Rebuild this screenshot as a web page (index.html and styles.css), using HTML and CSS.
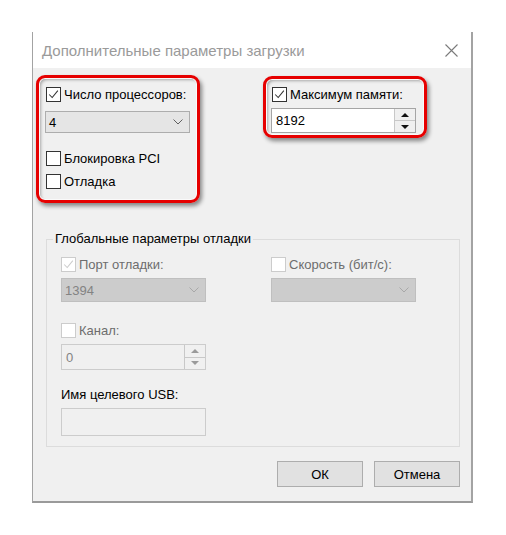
FILE: index.html
```html
<!DOCTYPE html>
<html lang="ru">
<head>
    <meta charset="UTF-8">
    <title>Дополнительные параметры загрузки</title>
    <link rel="stylesheet" href="styles.css">
</head>
<body>
    <div class="dialog">
        <div class="titlebar">
            <span class="title">Дополнительные параметры загрузки</span>
            <svg class="close" width="13" height="13" viewBox="0 0 13 13">
                <path d="M0.5 0.5 L12.5 12.5 M12.5 0.5 L0.5 12.5" stroke="#7a7a7a" stroke-width="1.1" fill="none"/>
            </svg>
        </div>

        <div class="content">
            <div class="top-row">
                <div class="mark mark-cpu">
                    <label class="check">
                        <span class="box"><svg viewBox="0 0 15 15"><path d="M2.5 7.5 L6 11 L12.5 3" /></svg></span>
                        Число процессоров:
                    </label>
                    <div class="select">
                        <span>4</span>
                        <svg class="chevron" viewBox="0 0 10 6"><path d="M0.5 0.5 L5 5 L9.5 0.5"/></svg>
                    </div>
                    <label class="check check-pci"><span class="box"></span>Блокировка PCI</label>
                    <label class="check check-debug"><span class="box"></span>Отладка</label>
                </div>

                <div class="mark mark-mem">
                    <label class="check">
                        <span class="box"><svg viewBox="0 0 15 15"><path d="M2.5 7.5 L6 11 L12.5 3" /></svg></span>
                        Максимум памяти:
                    </label>
                    <div class="spin">
                        <span>8192</span>
                        <div class="spin-btns">
                            <span class="up"></span>
                            <span class="down"></span>
                        </div>
                    </div>
                </div>
            </div>

            <div class="group">
                <span class="legend">Глобальные параметры отладки</span>
                <div class="group-row">
                    <div class="col">
                        <label class="check disabled">
                            <span class="box"><svg viewBox="0 0 15 15"><path d="M2.5 7.5 L6 11 L12.5 3" /></svg></span>
                            Порт отладки:
                        </label>
                        <div class="select select-off">
                            <span>1394</span>
                            <svg class="chevron" viewBox="0 0 10 6"><path d="M0.5 0.5 L5 5 L9.5 0.5"/></svg>
                        </div>
                    </div>
                    <div class="col">
                        <label class="check disabled"><span class="box"></span>Скорость (бит/с):</label>
                        <div class="select select-off">
                            <span></span>
                            <svg class="chevron" viewBox="0 0 10 6"><path d="M0.5 0.5 L5 5 L9.5 0.5"/></svg>
                        </div>
                    </div>
                </div>

                <label class="check disabled check-channel"><span class="box"></span>Канал:</label>
                <div class="spin spin-off">
                    <span>0</span>
                    <div class="spin-btns">
                        <span class="up"></span>
                        <span class="down"></span>
                    </div>
                </div>

                <div class="usb-label">Имя целевого USB:</div>
                <div class="usb-input"></div>
            </div>

            <div class="buttons">
                <button class="btn">ОК</button>
                <button class="btn">Отмена</button>
            </div>
        </div>
    </div>
</body>
</html>
```

FILE: styles.css
```css
* {
    margin: 0;
    padding: 0;
    box-sizing: border-box;
}

body {
    background: #fff;
    font-family: 'Liberation Sans', Arial, sans-serif;
    font-size: 13px;
    color: #000;
    padding: 32px 0 0 32px;
}

.dialog {
    width: 441px;
    height: 471px;
    border-left: 1px solid #a3a3a3;
    border-right: 2px solid #a3a3a3;
    border-bottom: 2px solid #9a9a9a;
    display: flex;
    flex-direction: column;
}

.titlebar {
    height: 36px;
    background: #fff;
    display: flex;
    align-items: center;
    justify-content: space-between;
    padding: 0 13px 0 9px;
}

.title {
    font-size: 15px;
    color: #9a9a9a;
}

.content {
    flex: 1;
    background: #f0f0f0;
    padding: 7px 11px 0 3px;
}

.top-row {
    display: flex;
    gap: 63px;
}

/* red highlight frames */
.mark {
    width: 164px;
    border: 3px solid #e60000;
    border-radius: 9px;
    box-shadow: 2px 3px 4px rgba(0, 0, 0, 0.45), inset 0 0 0 1px #fafafa, inset 2px 2px 3px rgba(0, 0, 0, 0.3);
}

.mark-cpu {
    height: 128px;
    padding: 9px 0 0 7px;
}

.mark-mem {
    height: 62px;
    margin-top: 1px;
    padding: 8px 0 0 6px;
}

.check {
    display: flex;
    align-items: center;
    height: 15px;
    white-space: nowrap;
}

.box {
    width: 15px;
    height: 15px;
    border: 1px solid #333;
    background: #fff;
    margin-right: 3px;
    flex: none;
}

.box svg {
    display: block;
    width: 13px;
    height: 13px;
}

.box path {
    fill: none;
    stroke: #333;
    stroke-width: 1.2;
}

.check.disabled {
    color: #6d6d6d;
}

.check.disabled .box {
    border-color: #cccccc;
}

.check.disabled .box path {
    stroke: #cccccc;
}

.check-pci {
    margin-top: 18px;
}

.check-debug {
    margin-top: 8px;
}

.select {
    width: 145px;
    height: 22px;
    margin: 9px 0 0 -1px;
    background: #e5e5e5;
    border: 1px solid #adadad;
    display: flex;
    align-items: center;
    justify-content: space-between;
    padding: 0 6px 0 3px;
}

.chevron {
    width: 10px;
    height: 6px;
}

.chevron path {
    fill: none;
    stroke: #606060;
    stroke-width: 1;
}

.select-off {
    height: 24px;
    margin: 6px 0 0 0;
    background: #cccccc;
    border-color: #bfbfbf;
    color: #838383;
}

.select-off .chevron path {
    stroke: #a8a8a8;
}

.spin {
    width: 145px;
    height: 25px;
    margin: 6px 0 0 -1px;
    background: #fff;
    border: 1px solid #a5a5a5;
    display: flex;
    align-items: center;
    justify-content: space-between;
    padding-left: 4px;
}

.spin-btns {
    width: 21px;
    height: 100%;
    display: flex;
    flex-direction: column;
    border-left: 1px solid #c8c8c8;
    background: #f0f0f0;
}

.spin-btns span {
    flex: 1;
    display: flex;
    align-items: center;
    justify-content: center;
}

.spin-btns .up {
    border-bottom: 1px solid #c8c8c8;
}

.spin-btns .up::after {
    content: '';
    border-left: 4px solid transparent;
    border-right: 4px solid transparent;
    border-bottom: 4px solid #111;
}

.spin-btns .down::after {
    content: '';
    border-left: 4px solid transparent;
    border-right: 4px solid transparent;
    border-top: 4px solid #111;
}

.spin-off {
    height: 26px;
    margin: 6px 0 0 0;
    background: #f0f0f0;
    border-color: #cccccc;
    color: #838383;
}

.spin-off .spin-btns .up::after {
    border-bottom-color: #9a9a9a;
}

.spin-off .spin-btns .down::after {
    border-top-color: #9a9a9a;
}

/* group box */
.group {
    position: relative;
    width: 414px;
    height: 208px;
    margin: 36px 0 0 10px;
    border: 1px solid #dcdcdc;
    padding: 17px 0 0 14px;
}

.legend {
    position: absolute;
    left: 6px;
    top: -9px;
    padding: 0 2px;
    background: #f0f0f0;
    line-height: 16px;
}

.group-row {
    display: flex;
    gap: 65px;
}

.col {
    width: 145px;
}

.check-channel {
    margin-top: 21px;
}

.usb-label {
    margin-top: 17px;
    height: 15px;
    line-height: 15px;
}

.usb-input {
    width: 145px;
    height: 28px;
    margin-top: 6px;
    border: 1px solid #cccccc;
    background: #f0f0f0;
}

.buttons {
    display: flex;
    justify-content: flex-end;
    gap: 11px;
    margin-top: 14px;
}

.btn {
    width: 86px;
    height: 26px;
    background: #e1e1e1;
    border: 1px solid #adadad;
    font-family: 'Liberation Sans', Arial, sans-serif;
    font-size: 13px;
    color: #000;
}
```
